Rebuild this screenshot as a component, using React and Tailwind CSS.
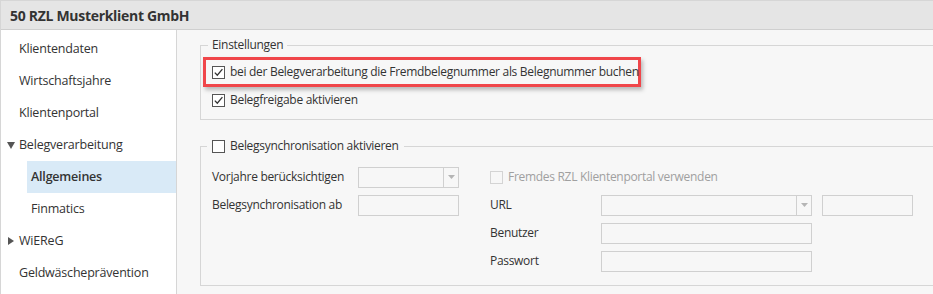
import React from "react";

const font = { fontFamily: '"Open Sans", "Noto Sans", sans-serif' };

function Check({ checked, disabled }) {
  return (
    <span
      className={`inline-flex h-[13px] w-[13px] shrink-0 items-center justify-center border ${
        disabled ? "border-[#d4d4d4] bg-[#f7f7f7]" : "border-[#555] bg-white"
      }`}
    >
      {checked && (
        <svg width="11" height="11" viewBox="0 0 11 11">
          <path d="M1.8 5.6 L4.3 8.2 L9.4 2.2" fill="none" stroke="#333" strokeWidth="1.3" />
        </svg>
      )}
    </span>
  );
}

function Input({ w, select }) {
  return (
    <div className={`flex h-[21px] ${w} border border-[#d0d0d0] bg-[#f7f7f7]`}>
      <div className="flex-1" />
      {select && (
        <div className="flex w-[15px] items-center justify-center border-l border-[#d0d0d0]">
          <svg width="7" height="4" viewBox="0 0 7 4">
            <path d="M0 0 H7 L3.5 4 Z" fill="#b5b5b5" />
          </svg>
        </div>
      )}
    </div>
  );
}

function NavItem({ children, level = 0, active, arrow }) {
  return (
    <div className="flex h-[32px] items-center">
      {level === 1 ? (
        <div
          className={`ml-[26px] flex h-full flex-1 items-center pl-[4px] ${
            active ? "bg-[#d9eaf7] font-semibold" : ""
          }`}
        >
          {children}
        </div>
      ) : (
        <div className="flex items-center">
          <span className="flex w-[18px] justify-center pl-[1px]">
            {arrow === "down" && (
              <svg width="8" height="7" viewBox="0 0 8 7">
                <path d="M0 0 H8 L4 7 Z" fill="#555" />
              </svg>
            )}
            {arrow === "right" && (
              <svg width="6" height="8" viewBox="0 0 6 8">
                <path d="M0 0 V8 L6 4 Z" fill="#555" />
              </svg>
            )}
          </span>
          <span>{children}</span>
        </div>
      )}
    </div>
  );
}

export default function App() {
  return (
    <div
      className="flex h-[294px] w-[933px] flex-col overflow-hidden whitespace-nowrap border-l border-t border-[#d6d6d6] bg-white text-[#333]"
      style={font}
    >
      <div className="flex h-[29px] shrink-0 items-center border-b border-[#cfcfcf] bg-[#e5e5e5] pl-[9px] text-[14px] font-bold tracking-[-0.3px]">
        50 RZL Musterklient GmbH
      </div>
      <div className="flex flex-1">
        <div className="w-[176px] shrink-0 border-r border-[#d6d6d6] bg-white pt-[3px] text-[12.5px] tracking-[-0.2px]">
          <NavItem>Klientendaten</NavItem>
          <NavItem>Wirtschaftsjahre</NavItem>
          <NavItem>Klientenportal</NavItem>
          <NavItem arrow="down">Belegverarbeitung</NavItem>
          <NavItem level={1} active>
            Allgemeines
          </NavItem>
          <NavItem level={1}>Finmatics</NavItem>
          <NavItem arrow="right">WiEReG</NavItem>
          <NavItem>Geldwäscheprävention</NavItem>
        </div>
        <div className="flex-1 overflow-hidden bg-[#f7f7f7] pl-[23px] pt-[7px] text-[12px] tracking-[-0.3px]">
          <fieldset className="-mr-[20px] border border-[#d6d6d6] pb-[6px] pl-[2px]">
            <legend className="ml-[5px] px-[4px] leading-[16px]">Einstellungen</legend>
            <div className="mt-[4px] flex h-[30px] w-[438px] items-center gap-[5px] border-[3px] border-[#f0464a] pl-[6px] shadow-[2px_3px_4px_rgba(0,0,0,0.25)]">
              <Check checked />
              <span>bei der Belegverarbeitung die Fremdbelegnummer als Belegnummer buchen</span>
            </div>
            <div className="flex h-[26px] items-center gap-[5px] pl-[9px]">
              <Check checked />
              <span>Belegfreigabe aktivieren</span>
            </div>
          </fieldset>
          <fieldset className="-mr-[20px] mt-[18px] border border-[#d6d6d6] pb-[10px] pl-[11px]">
            <legend className="-ml-[5px] flex items-center gap-[5px] px-[5px] leading-[16px]">
              <Check />
              <span>Belegsynchronisation aktivieren</span>
            </legend>
            <div className="mt-[9px] flex">
              <div className="flex w-[278px] flex-col">
                <div className="flex h-[28px] items-center">
                  <span className="w-[146px]">Vorjahre berücksichtigen</span>
                  <Input w="w-[101px]" select />
                </div>
                <div className="flex h-[28px] items-center">
                  <span className="w-[146px]">Belegsynchronisation ab</span>
                  <Input w="w-[101px]" />
                </div>
              </div>
              <div className="flex flex-col">
                <div className="flex h-[28px] items-center gap-[5px] text-[#a0a0a0]">
                  <Check disabled />
                  <span>Fremdes RZL Klientenportal verwenden</span>
                </div>
                <div className="flex h-[28px] items-center">
                  <span className="w-[111px]">URL</span>
                  <Input w="w-[211px]" select />
                  <div className="ml-[10px]">
                    <Input w="w-[91px]" />
                  </div>
                </div>
                <div className="flex h-[28px] items-center">
                  <span className="w-[111px]">Benutzer</span>
                  <Input w="w-[211px]" />
                </div>
                <div className="flex h-[28px] items-center">
                  <span className="w-[111px]">Passwort</span>
                  <Input w="w-[211px]" />
                </div>
              </div>
            </div>
          </fieldset>
        </div>
      </div>
    </div>
  );
}
